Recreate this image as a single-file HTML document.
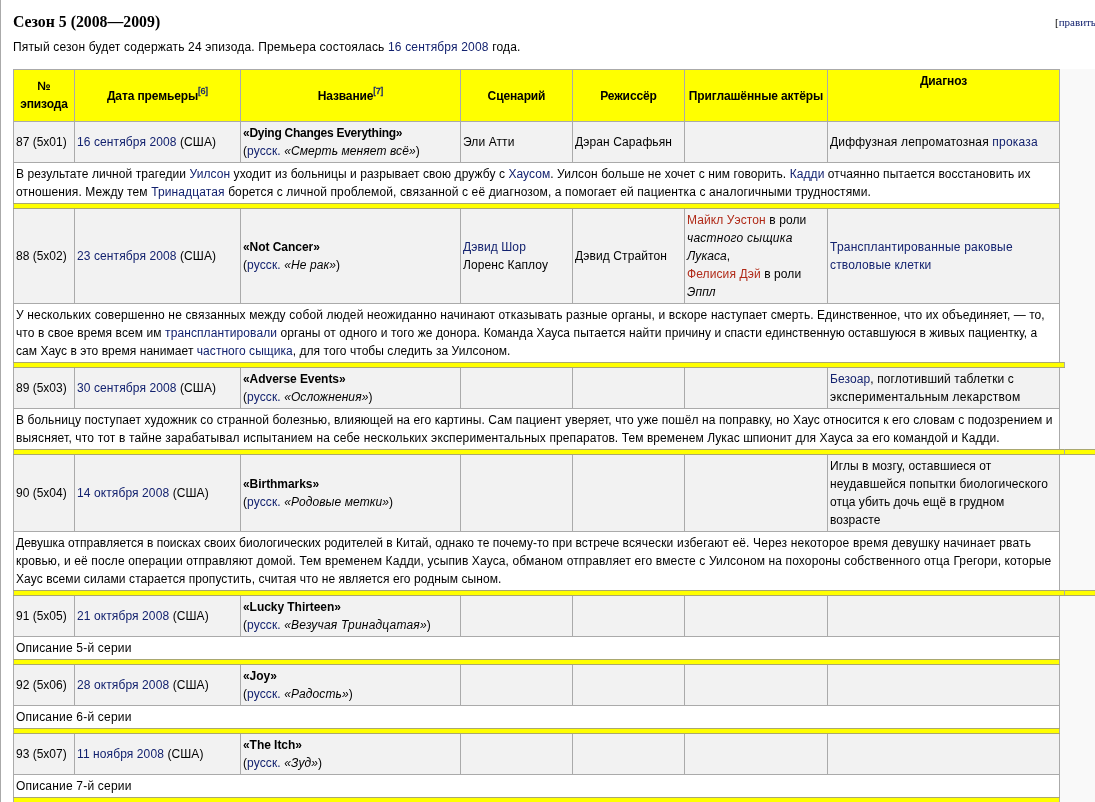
<!DOCTYPE html>
<html lang="ru">
<head>
<meta charset="utf-8">
<title>Сезон 5 (2008—2009)</title>
<style>
html,body{margin:0;padding:0;background:#fff;overflow:hidden;}
body{width:1095px;height:802px;overflow:hidden;position:relative;font-family:"Liberation Sans",Arial,sans-serif;font-size:12px;line-height:18px;color:#000;}
#leftline{position:absolute;left:0;top:0;width:1px;height:802px;background:#aaa;}
a{color:#13226f;text-decoration:none;}
a.new{color:#b02a18;}
h3{position:absolute;left:13px;top:12px;margin:0;font-family:"Liberation Serif","Times New Roman",serif;font-size:15.8px;line-height:20px;font-weight:bold;white-space:nowrap;}
#edit{position:absolute;left:1055px;top:15px;width:40px;overflow:hidden;font-family:"Liberation Serif","Times New Roman",serif;font-size:11px;line-height:14px;white-space:nowrap;}
#intro{position:absolute;left:13px;top:38px;margin:0;white-space:nowrap;}
#wrap{position:absolute;left:13px;top:69px;width:1082px;height:733px;overflow:hidden;}
table{border-collapse:collapse;table-layout:fixed;background:#f9f9f9;width:1100px;}
td,th{border:1px solid #aaa;padding:2px 2px;vertical-align:middle;text-align:left;overflow:hidden;}
th{background:#ffff00;text-align:center;font-weight:bold;letter-spacing:-0.12px;}
tr.ep td{letter-spacing:0.1px;}
tr.ep td b{letter-spacing:-0.05px;}
tr.ep td:first-child{letter-spacing:0;}
tr.ep td{background:#f2f2f2;}
tr.desc td{background:#fff;white-space:nowrap;border-bottom-color:#aaa870;}
.ln{white-space:nowrap;}
tr.sep td{border-top-color:#aaa870;border-bottom-color:#aaa870;background:#ffff00;padding:0;height:4px;line-height:0;font-size:0;}
td.x{border:none;background:transparent !important;}
sup{font-size:9px;line-height:0;font-weight:normal;vertical-align:baseline;position:relative;top:-6px;letter-spacing:0;-webkit-text-stroke:0.35px #13226f;}
</style>
</head>
<body style="will-change:transform">
<div id="leftline"></div>
<h3>Сезон 5 (2008—2009)</h3>
<div id="edit">[<a href="#">править</a>]</div>
<p id="intro"><span class="ln" id="intro1" style="letter-spacing:0.167px">Пятый сезон будет содержать 24 эпизода. Премьера состоялась <a href="#">16 сентября</a> <a href="#">2008</a> года.</span></p>
<div id="wrap">
<table>
<colgroup>
<col style="width:61px"><col style="width:166px"><col style="width:220px"><col style="width:112px"><col style="width:112px"><col style="width:143px"><col style="width:232px"><col style="width:5px"><col style="width:49px">
</colgroup>
<tr class="head" style="height:52px">
<th style="padding-bottom:4px">№ эпизода</th>
<th>Дата премьеры<sup><a href="#">[6]</a></sup></th>
<th>Название<sup><a href="#">[7]</a></sup></th>
<th>Сценарий</th>
<th>Режиссёр</th>
<th>Приглашённые актёры</th>
<th style="vertical-align:top">Диагноз</th>
<td class="x"></td><td class="x"></td>
</tr>
<tr class="ep" style="height:41px">
<td>87 (5x01)</td>
<td><a href="#">16 сентября</a> <a href="#">2008</a> (США)</td>
<td><b style="letter-spacing:-0.26px">«Dying Changes Everything»</b><br>(<a href="#">русск.</a> <i>«Смерть меняет всё»</i>)</td>
<td>Эли Атти</td>
<td>Дэран Сарафьян</td>
<td></td>
<td><span class="ln" style="letter-spacing:0.19px">Диффузная лепроматозная <a href="#">проказа</a></span></td>
<td class="x"></td><td class="x"></td>
</tr>
<tr class="desc">
<td colspan="7"><span class="ln" id="d87a" style="letter-spacing:0.073px">В результате личной трагедии <a href="#">Уилсон</a> уходит из больницы и разрывает свою дружбу с <a href="#">Хаусом</a>. Уилсон больше не хочет с ним говорить. <a href="#">Кадди</a> отчаянно пытается восстановить их</span><br>
<span class="ln" id="d87b" style="letter-spacing:0.120px">отношения. Между тем <a href="#">Тринадцатая</a> борется с личной проблемой, связанной с её диагнозом, а помогает ей пациентка с аналогичными трудностями.</span></td>
<td class="x"></td><td class="x"></td>
</tr>
<tr class="sep"><td colspan="7"></td><td class="x"></td><td class="x"></td></tr>
<tr class="ep">
<td>88 (5x02)</td>
<td><a href="#">23 сентября</a> <a href="#">2008</a> (США)</td>
<td><b>«Not Cancer»</b><br>(<a href="#">русск.</a> <i>«Не рак»</i>)</td>
<td><a href="#">Дэвид Шор</a><br>Лоренс Каплоу</td>
<td>Дэвид Страйтон</td>
<td><a href="#" class="new">Майкл Уэстон</a> в роли <i><span style="letter-spacing:0.24px">частного сыщика</span> Лукаса</i>,<br><a href="#" class="new">Фелисия Дэй</a> в роли <i>Эппл</i></td>
<td><a href="#"><span class="ln" style="letter-spacing:0.22px">Трансплантированные раковые</span><br><span class="ln" style="letter-spacing:0.15px">стволовые клетки</span></a></td>
<td class="x"></td><td class="x"></td>
</tr>
<tr class="desc">
<td colspan="7"><span class="ln" id="d88a" style="letter-spacing:0.158px">У нескольких совершенно не связанных между собой людей неожиданно начинают отказывать разные органы, и вскоре </span><span class="ln" id="d88a2" style="letter-spacing:0.062px">наступает смерть. Единственное, что их объединяет, — то,</span><br>
<span class="ln" id="d88b" style="letter-spacing:0.090px">что в свое время всем им <a href="#">трансплантировали</a> органы от одного и того же донора. Команда Хауса пытается найти причину </span><span class="ln" id="d88b2" style="letter-spacing:-0.005px">и спасти единственную оставшуюся в живых пациентку, а</span><br>
<span class="ln" id="d88c" style="letter-spacing:0.047px">сам Хаус в это время нанимает <a href="#">частного сыщика</a>, для того чтобы следить за Уилсоном.</span></td>
<td class="x"></td><td class="x"></td>
</tr>
<tr class="sep"><td colspan="8"></td><td class="x"></td></tr>
<tr class="ep">
<td>89 (5x03)</td>
<td><a href="#">30 сентября</a> <a href="#">2008</a> (США)</td>
<td><b>«Adverse Events»</b><br>(<a href="#">русск.</a> <i>«Осложнения»</i>)</td>
<td></td>
<td></td>
<td></td>
<td><span class="ln" style="letter-spacing:0.11px"><a href="#">Безоар</a>, поглотивший таблетки с</span><br><span class="ln" style="letter-spacing:0.27px">экспериментальным лекарством</span></td>
<td class="x"></td><td class="x"></td>
</tr>
<tr class="desc">
<td colspan="7"><span class="ln" id="d89a" style="letter-spacing:0.092px">В больницу поступает художник со странной болезнью, влияющей на его картины. Сам пациент уверяет, что уже пошёл на поправку, но Хаус относится к его словам с подозрением и</span><br>
<span class="ln" id="d89b" style="letter-spacing:0.164px">выясняет, что тот в тайне зарабатывал испытанием на себе нескольких экспериментальных </span><span class="ln" id="d89b2" style="letter-spacing:0.079px">препаратов. Тем временем Лукас шпионит для Хауса за его командой и Кадди.</span></td>
<td class="x"></td><td class="x"></td>
</tr>
<tr class="sep"><td colspan="8"></td><td></td></tr>
<tr class="ep">
<td>90 (5x04)</td>
<td><a href="#">14 октября</a> <a href="#">2008</a> (США)</td>
<td><b>«Birthmarks»</b><br>(<a href="#">русск.</a> <i>«Родовые метки»</i>)</td>
<td></td>
<td></td>
<td></td>
<td><span class="ln" style="letter-spacing:0.07px">Иглы в мозгу, оставшиеся от</span><br><span class="ln" style="letter-spacing:0.14px">неудавшейся попытки биологического</span><br><span class="ln" style="letter-spacing:0px">отца убить дочь ещё в грудном</span><br><span class="ln">возрасте</span></td>
<td class="x"></td><td class="x"></td>
</tr>
<tr class="desc">
<td colspan="7"><span class="ln" id="d90a" style="letter-spacing:0.003px">Девушка отправляется в поисках своих биологических родителей в Китай, однако те почему-то при встрече </span><span class="ln" id="d90a2" style="letter-spacing:0.173px">всячески избегают её. Через некоторое время девушку начинает рвать</span><br>
<span class="ln" id="d90b" style="letter-spacing:0.130px">кровью, и её после операции отправляют домой. Тем временем Кадди, усыпив Хауса, обманом отправляет его вместе с Уилсоном на похороны собственного отца Грегори, которые</span><br>
<span class="ln" id="d90c" style="letter-spacing:0.081px">Хаус всеми силами старается пропустить, считая что не является его родным сыном.</span></td>
<td class="x"></td><td class="x"></td>
</tr>
<tr class="sep"><td colspan="8"></td><td></td></tr>
<tr class="ep">
<td>91 (5x05)</td>
<td><a href="#">21 октября</a> <a href="#">2008</a> (США)</td>
<td><b>«Lucky Thirteen»</b><br>(<a href="#">русск.</a> <i style="letter-spacing:0.2px">«Везучая Тринадцатая»</i>)</td>
<td></td><td></td><td></td><td></td>
<td class="x"></td><td class="x"></td>
</tr>
<tr class="desc">
<td colspan="7" style="letter-spacing:0.2px">Описание 5-й серии</td>
<td class="x"></td><td class="x"></td>
</tr>
<tr class="sep"><td colspan="7"></td><td class="x"></td><td class="x"></td></tr>
<tr class="ep">
<td>92 (5x06)</td>
<td><a href="#">28 октября</a> <a href="#">2008</a> (США)</td>
<td><b>«Joy»</b><br>(<a href="#">русск.</a> <i>«Радость»</i>)</td>
<td></td><td></td><td></td><td></td>
<td class="x"></td><td class="x"></td>
</tr>
<tr class="desc">
<td colspan="7" style="letter-spacing:0.2px">Описание 6-й серии</td>
<td class="x"></td><td class="x"></td>
</tr>
<tr class="sep"><td colspan="7"></td><td class="x"></td><td class="x"></td></tr>
<tr class="ep">
<td>93 (5x07)</td>
<td><a href="#">11 ноября</a> <a href="#">2008</a> (США)</td>
<td><b>«The Itch»</b><br>(<a href="#">русск.</a> <i>«Зуд»</i>)</td>
<td></td><td></td><td></td><td></td>
<td class="x"></td><td class="x"></td>
</tr>
<tr class="desc">
<td colspan="7" style="letter-spacing:0.2px">Описание 7-й серии</td>
<td class="x"></td><td class="x"></td>
</tr>
<tr class="sep"><td colspan="7"></td><td class="x"></td><td class="x"></td></tr>
</table>
</div>
</body>
</html>
